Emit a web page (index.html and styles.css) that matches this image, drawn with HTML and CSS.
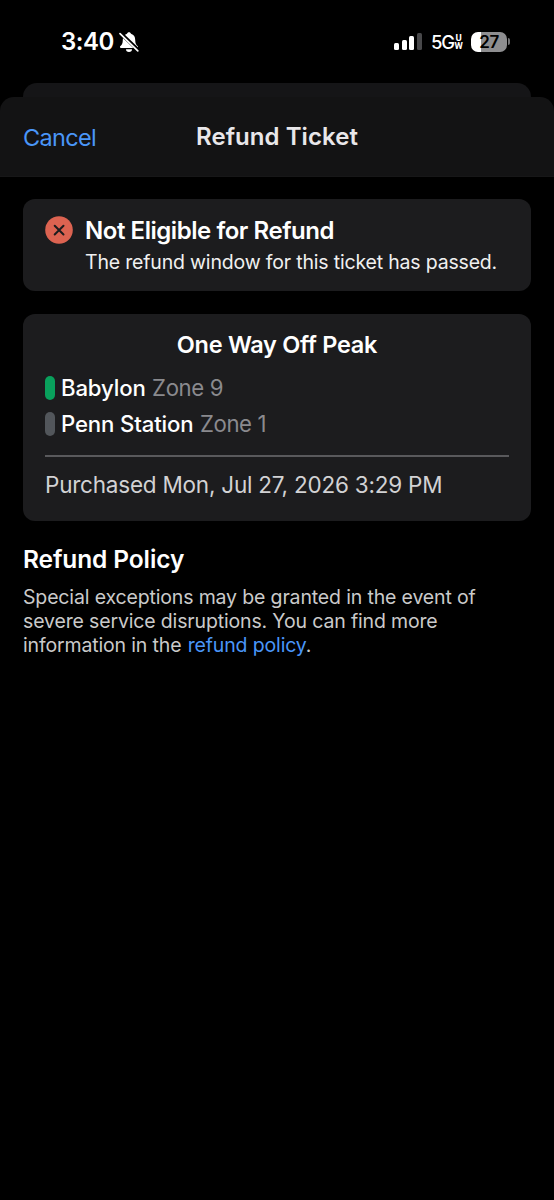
FILE: index.html
```html
<!DOCTYPE html>
<html lang="en">
<head>
<meta charset="utf-8">
<title>Refund Ticket</title>
<link rel="stylesheet" href="styles.css">
</head>
<body>
<div class="status">
  <div class="status-left">
    <span class="time">3:40</span>
    <svg class="bell" width="22" height="22" viewBox="0 0 22 22">
      <path d="M11 1.200c-1 0-1.800.7-2 1.600C6 3.600 4.800 6 4.800 9c0 3.500-1 4.800-2.600 6.300-.5.600-.2 1.700.7 1.700h16.200c.9 0 1.200-1.100.7-1.700C18.200 13.800 17.200 12.500 17.200 9c0-3-1.200-5.400-4.200-6.200-.2-.9-1-1.600-2-1.600zM8 18.300a3 2.700 0 0 0 6 0z" fill="#fff"/>
      <path d="M2.200 1.900 20.500 19.400" stroke="#000" stroke-width="3.600"/>
      <path d="M2 2.700 19.800 19.800" stroke="#fff" stroke-width="1.700" stroke-linecap="round"/>
    </svg>
  </div>
  <div class="status-right">
    <div class="signal"><i class="b1"></i><i class="b2"></i><i class="b3"></i><i class="b4"></i></div>
    <div class="network"><span class="gen">5G</span><span class="uw"><span>U</span><span>W</span></span></div>
    <div class="battery"><div class="cell">27</div><i class="tip"></i></div>
  </div>
</div>
<div class="behind"></div>
<header class="nav">
  <a class="cancel">Cancel</a>
  <h1 class="title">Refund Ticket</h1>
</header>
<main class="content">
  <section class="card notice">
    <svg class="error" width="28" height="28" viewBox="0 0 28 28"><circle cx="14" cy="14" r="13.800" fill="#dc6351"/><path d="M9.700 9.700l8.800 8.800M18.500 9.700l-8.800 8.800" stroke="#1c1c1e" stroke-width="2" stroke-linecap="round"/></svg>
    <div class="notice-text">
      <h2 class="notice-title">Not Eligible for Refund</h2>
      <p class="notice-body">The refund window for this ticket has passed.</p>
    </div>
  </section>
  <section class="card ticket">
    <h2 class="ticket-title">One Way Off Peak</h2>
    <div class="stop"><i class="pill green"></i><span class="station">Babylon</span><span class="zone">Zone 9</span></div>
    <div class="stop"><i class="pill gray"></i><span class="station">Penn Station</span><span class="zone">Zone 1</span></div>
    <p class="purchased">Purchased Mon, Jul 27, 2026 3:29 PM</p>
  </section>
  <section class="policy">
    <h2 class="policy-title">Refund Policy</h2>
    <p class="policy-body">Special exceptions may be granted in the event of<br>severe service disruptions. You can find more<br>information in the <a class="link">refund policy</a>.</p>
  </section>
</main>
</body>
</html>
```
FILE: styles.css
```css
* { box-sizing: border-box; }
body { margin: 0; min-height: 1200px; background: #000; color: #fff; font-family: Inter, "Liberation Sans", sans-serif; white-space: nowrap; }
h1, h2, p { margin: 0; }
svg { flex: none; }
.status { height: 83px; display: flex; justify-content: space-between; align-items: flex-start; padding: 26px 44px 0 61px; }
.status-left, .status-right { display: flex; align-items: center; height: 31px; }
.time { font-size: 24px; font-weight: 600; letter-spacing: -.5px; line-height: 31px; }
.bell { margin-left: 4px; }
.signal { display: flex; align-items: flex-end; gap: 2.700px; height: 17px; margin-right: 9px; }
.signal i { width: 5px; border-radius: 1.500px; background: #fff; }
.signal .b1 { height: 7px; }
.signal .b2 { height: 10px; }
.signal .b3 { height: 14px; }
.signal .b4 { height: 17px; background: #48484a; }
.network { display: flex; align-items: center; margin-right: 8px; }
.gen { width: 23.500px; font-size: 18.500px; font-weight: 500; letter-spacing: -1.200px; line-height: 30px; }
.uw { display: flex; flex-direction: column; align-items: center; width: 8.500px; font-family: Roboto, sans-serif; font-size: 9.500px; font-weight: 700; line-height: 8px; }
.battery { display: flex; align-items: center; }
.cell { width: 36px; height: 20px; border-radius: 7px; background: linear-gradient(90deg, #fff 27%, #8e8e90 27%); color: #000; font-size: 17px; font-weight: 600; line-height: 20px; text-align: center; letter-spacing: -.5px; }
.tip { width: 2px; height: 7px; margin-left: 1px; border-radius: 0 3px 3px 0; background: #737375; }
.behind { height: 14px; margin: 0 23px; border-radius: 14px 14px 0 0; background: #151517; }
.nav { height: 80px; border-radius: 14px 14px 0 0; background: #131314; display: grid; grid-template-columns: 1fr auto 1fr; align-items: center; padding: 0 23px; border-bottom: 1px solid #171718; }
.cancel { color: #4a96f8; font-size: 23.500px; letter-spacing: -.65px; padding-top: 1px; }
.title { color: #e9e7ea; font-size: 24px; font-weight: 600; letter-spacing: .06px; }
.content { padding: 22px 23px 0; }
.card { background: #1c1c1e; border-radius: 12px; }
.notice { height: 92px; display: flex; padding: 17px 22px; gap: 12px; }
.notice-title { font-size: 24px; font-weight: 600; line-height: 30px; letter-spacing: -.45px; }
.notice-body { color: #f0f0f0; font-size: 19.500px; letter-spacing: -.18px; line-height: 26px; margin-top: 3px; }
.ticket { height: 207px; margin-top: 22.500px; padding: 15.500px 22px; }
.ticket-title { text-align: center; font-size: 23.500px; font-weight: 600; letter-spacing: -.3px; line-height: 32px; margin-bottom: 9px; }
.stop { display: flex; align-items: center; height: 36px; }
.pill { width: 10px; height: 24px; border-radius: 5px; margin-right: 6px; }
.green { background: #09a05c; }
.gray { background: #52565b; }
.station { font-size: 22.200px; font-weight: 500; letter-spacing: -.15px; padding-bottom: 2px; }
.zone { color: #8a8a8e; font-size: 22.200px; letter-spacing: -.4px; margin-left: 6.500px; padding-bottom: 2px; }
.purchased { border-top: 2px solid #59595c; margin-top: 13px; padding-top: 13px; line-height: 29px; color: #d2d2d4; font-size: 22.500px; letter-spacing: -.22px; }
.policy { padding-top: 22.500px; }
.policy-title { font-size: 24.500px; font-weight: 600; line-height: 32px; letter-spacing: -.12px; }
.policy-body { margin-top: 10px; font-size: 19.500px; letter-spacing: -.15px; line-height: 24px; color: #cacaca; }
.link { color: #4a96f8; margin-left: 1px; }
```
